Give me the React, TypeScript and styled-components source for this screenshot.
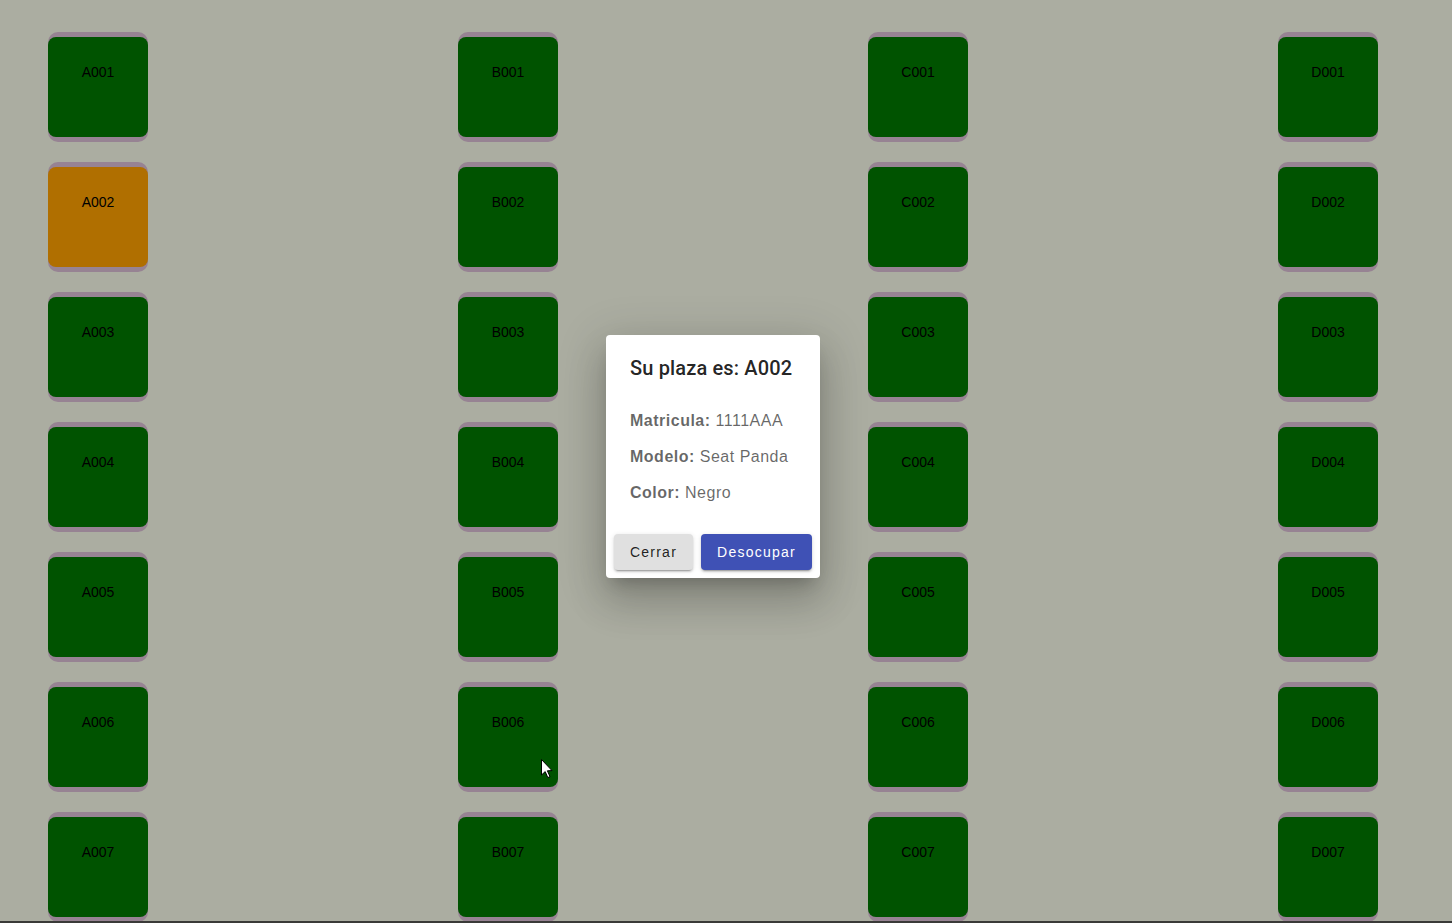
import React from "react";
import styled, { createGlobalStyle } from "styled-components";

const Global = createGlobalStyle`
  html, body { margin: 0; padding: 0; }
  body {
    background: #abada1;
    font-family: "Liberation Sans", Arial, sans-serif;
    overflow: hidden;
    height: 923px;
  }
`;

const Page = styled.div`
  position: relative;
  width: 1452px;
  height: 923px;
  display: flex;
  flex-direction: column;
`;

const Lot = styled.div`
  flex: 1;
  overflow: hidden;
  display: grid;
  grid-template-columns: repeat(4, 100px);
  column-gap: 310px;
  row-gap: 20px;
  padding: 32px 0 0 48px;
  align-content: start;
`;

const BottomBar = styled.div`
  height: 2px;
  background: #3a3a38;
  flex: none;
`;

const Spot = styled.div`
  width: 100px;
  height: 110px;
  border-radius: 10px;
  background: #978393;
  display: flex;
  align-items: center;
`;

const SpotFace = styled.div<{ $busy?: boolean }>`
  width: 100px;
  height: 100px;
  border-radius: 8px;
  background: ${(p) => (p.$busy ? "#b06f00" : "#005300")};
  color: #000;
  font-size: 14px;
  line-height: 16px;
  text-align: center;
  padding-top: 27px;
  box-sizing: border-box;
`;

const Dialog = styled.div`
  position: absolute;
  left: 606px;
  top: 335px;
  width: 214px;
  background: #fff;
  border-radius: 4px;
  box-shadow: 0px 11px 15px -7px rgba(0, 0, 0, 0.2),
    0px 24px 38px 3px rgba(0, 0, 0, 0.14), 0px 9px 46px 8px rgba(0, 0, 0, 0.12);
  font-family: Roboto, "Liberation Sans", sans-serif;
  display: flex;
  flex-direction: column;
`;

const Title = styled.h2`
  margin: 0;
  padding: 17px 24px 15px;
  font-size: 20px;
  font-weight: 500;
  line-height: 32px;
  letter-spacing: 0.15px;
  color: rgba(0, 0, 0, 0.87);
  white-space: nowrap;
`;

const Content = styled.div`
  padding: 10px 24px 21px;
  display: flex;
  flex-direction: column;
  gap: 12px;
`;

const Line = styled.p`
  margin: 0;
  font-family: "Liberation Sans", Arial, sans-serif;
  font-size: 16px;
  line-height: 24px;
  letter-spacing: 0.5px;
  color: rgba(0, 0, 0, 0.6);
  white-space: nowrap;
`;

const Label = styled.b`
  font-weight: 700;
`;

const Actions = styled.div`
  padding: 8px;
  display: flex;
  justify-content: flex-end;
  gap: 8px;
`;

const Button = styled.button<{ $primary?: boolean }>`
  font-family: "Liberation Sans", Arial, sans-serif;
  font-size: 14px;
  font-weight: 400;
  line-height: 24px;
  letter-spacing: 1.25px;
  padding: 6px 16px;
  border: none;
  border-radius: 4px;
  background: ${(p) => (p.$primary ? "#3f51b5" : "#e0e0e0")};
  color: ${(p) => (p.$primary ? "#fff" : "rgba(0,0,0,0.87)")};
  box-shadow: 0px 3px 1px -2px rgba(0, 0, 0, 0.2),
    0px 2px 2px 0px rgba(0, 0, 0, 0.14), 0px 1px 5px 0px rgba(0, 0, 0, 0.12);
  cursor: pointer;
`;

const Cursor = styled.svg`
  position: absolute;
  left: 541px;
  top: 759px;
`;

const rows = [1, 2, 3, 4, 5, 6, 7];
const cols = ["A", "B", "C", "D"];

export default function App() {
  return (
    <Page>
      <Global />
      <Lot>
        {rows.map((r) =>
          cols.map((c) => {
            const id = `${c}00${r}`;
            return (
              <Spot key={id}>
                <SpotFace $busy={id === "A002"}>{id}</SpotFace>
              </Spot>
            );
          })
        )}
      </Lot>
      <BottomBar />
      <Dialog>
        <Title>Su plaza es: A002</Title>
        <Content>
          <Line>
            <Label>Matricula:</Label> 1111AAA
          </Line>
          <Line>
            <Label>Modelo:</Label> Seat Panda
          </Line>
          <Line>
            <Label>Color:</Label> Negro
          </Line>
        </Content>
        <Actions>
          <Button>Cerrar</Button>
          <Button $primary>Desocupar</Button>
        </Actions>
      </Dialog>
      <Cursor width="12" height="20" viewBox="0 0 12 20">
        <path
          d="M0.5 0.5 L0.5 16 L4.2 12.6 L6.8 18.6 L9 17.6 L6.4 11.8 L11 11.6 Z"
          fill="#fff"
          stroke="#000"
          strokeWidth="1"
        />
      </Cursor>
    </Page>
  );
}
